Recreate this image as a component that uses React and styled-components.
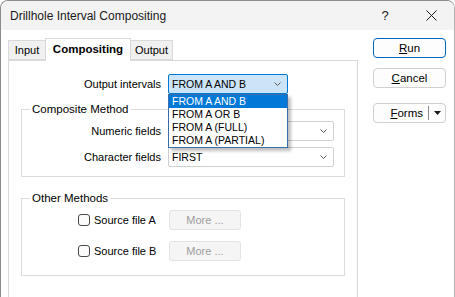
import React from 'react'
import styled, { createGlobalStyle } from 'styled-components'

const GlobalStyle = createGlobalStyle`
  html, body { margin: 0; padding: 0; background: #ffffff; }
  body { font-family: "Liberation Sans", Arial, sans-serif; font-size: 11px; color: #000; overflow: hidden; }
  * { box-sizing: border-box; }
`

const Window = styled.div`
  width: 455px;
  height: 297px;
  border-left: 1px solid #8c8c8c;
  border-top: 1px solid #8c8c8c;
  border-right: 1px solid #b0b0b0;
  border-top-left-radius: 8px;
  border-top-right-radius: 8px;
  background: #ffffff;
  display: flex;
  flex-direction: column;
  overflow: hidden;
`

const TitleBar = styled.div`
  height: 29px;
  background: #f3f3f3;
  display: flex;
  align-items: center;
  padding-left: 9px;
  flex-shrink: 0;
`

const TitleText = styled.div`
  flex: 1;
  font-size: 12px;
  color: #1a1a1a;
`

const CaptionButton = styled.div`
  width: 46px;
  height: 29px;
  display: flex;
  align-items: center;
  justify-content: center;
  font-size: 13px;
  color: #1a1a1a;
`

const Content = styled.div`
  flex: 1;
  display: flex;
  padding: 8px 0 0 7px;
  min-height: 0;
`

const MainColumn = styled.div`
  width: 350px;
  display: flex;
  flex-direction: column;
`

const TabStrip = styled.div`
  display: flex;
  align-items: flex-end;
  height: 22px;
  position: relative;
  z-index: 1;
`

const Tab = styled.div`
  width: ${p => p.$w}px;
  height: ${p => (p.$active ? 23 : 20)}px;
  margin-bottom: ${p => (p.$active ? -1 : 0)}px;
  margin-left: ${p => (p.$first ? 0 : -1)}px;
  border: 1px solid #d9d9d9;
  border-bottom: ${p => (p.$active ? 'none' : '1px solid #d9d9d9')};
  background: ${p => (p.$active ? '#ffffff' : '#f0f0f0')};
  font-weight: ${p => (p.$active ? 700 : 400)};
  font-size: ${p => (p.$active ? 11.5 : 11)}px;
  display: flex;
  align-items: center;
  justify-content: center;
  padding-bottom: ${p => (p.$active ? 3 : 0)}px;
  position: relative;
  z-index: ${p => (p.$active ? 2 : 1)};
`

const Panel = styled.div`
  flex: 1;
  border: 1px solid #d9d9d9;
  border-bottom: none;
  background: #ffffff;
  padding: 13px 11px 0 0;
  display: flex;
  flex-direction: column;
`

const FieldRow = styled.div`
  display: grid;
  grid-template-columns: ${p => p.$label}px ${p => p.$field}px;
  column-gap: 7px;
  align-items: center;
`

const Label = styled.div`
  text-align: right;
  color: #000;
`

const SelectWrap = styled.div`
  position: relative;
`

const Select = styled.div`
  height: 20px;
  border: 1px solid ${p => (p.$open ? '#0078d7' : '#d0d0d0')};
  border-radius: 2px;
  background: ${p => (p.$open ? '#cce4f7' : '#ffffff')};
  display: flex;
  align-items: center;
  padding: 0 6px 0 3px;
  font-size: 10.5px;
`

const SelectValue = styled.div`
  flex: 1;
`

const DropList = styled.div`
  position: absolute;
  top: 100%;
  left: 0;
  width: 100%;
  border: 1px solid #3b6ea8;
  background: #ffffff;
  box-shadow: 3px 3px 3px rgba(0, 0, 0, 0.25);
  z-index: 5;
  font-size: 10.5px;
`

const DropItem = styled.div`
  height: 13px;
  line-height: 13px;
  padding-left: 3px;
  background: ${p => (p.$selected ? '#0078d7' : 'transparent')};
  color: ${p => (p.$selected ? '#ffffff' : '#000000')};
`

const Group = styled.fieldset`
  margin: ${p => p.$top}px 0 0 12px;
  width: 324px;
  border: 1px solid #dcdcdc;
  padding: 4px 10px ${p => p.$bottom}px 0;
  min-width: 0;
`

const Legend = styled.legend`
  margin-left: 8px;
  padding: 0 2px;
  line-height: 16px;
  font-size: 11.5px;
`

const Rows = styled.div`
  display: flex;
  flex-direction: column;
  gap: ${p => p.$gap}px;
`

const CheckRow = styled.div`
  display: flex;
  align-items: center;
  padding-left: 56px;
`

const CheckLabel = styled.label`
  width: 91px;
  display: flex;
  align-items: center;
  gap: 4px;
`

const CheckBox = styled.span`
  width: 12px;
  height: 12px;
  border: 1px solid #4a4a4a;
  border-radius: 3px;
  background: #fbfbfb;
`

const MoreButton = styled.div`
  width: 72px;
  height: 20px;
  border: 1px solid #e3e3e3;
  border-radius: 3px;
  background: #f5f5f5;
  color: #9d9d9d;
  display: flex;
  align-items: center;
  justify-content: center;
`

const SideColumn = styled.div`
  width: 73px;
  margin-left: 15px;
  display: flex;
  flex-direction: column;
`

const Button = styled.div`
  height: 20px;
  margin-top: ${p => p.$mt}px;
  border: 1px solid ${p => (p.$primary ? '#0067c0' : '#d0d0d0')};
  border-radius: 4px;
  background: #fdfdfd;
  display: flex;
  align-items: center;
  justify-content: center;
  font-size: 11.5px;
`

const SplitText = styled.div`
  flex: 1;
  text-align: right;
  padding-right: 5px;
`

const SplitArrow = styled.div`
  width: 17px;
  height: 14px;
  border-left: 1px solid #8a8a8a;
  display: flex;
  align-items: center;
  justify-content: center;
`

const Chevron = () => (
  <svg width="7" height="4" viewBox="0 0 7 4">
    <path d="M0.5 0.5 L3.5 3.5 L6.5 0.5" fill="none" stroke="#5a5a5a" strokeWidth="1" />
  </svg>
)

const items = ['FROM A AND B', 'FROM A OR B', 'FROM A (FULL)', 'FROM A (PARTIAL)']

const App = () => {
  return (
    <>
      <GlobalStyle />
      <Window>
        <TitleBar>
          <TitleText>Drillhole Interval Compositing</TitleText>
          <CaptionButton>?</CaptionButton>
          <CaptionButton>
            <svg width="11" height="11" viewBox="0 0 11 11">
              <path d="M0.5 0.5 L10.5 10.5 M10.5 0.5 L0.5 10.5" stroke="#1a1a1a" strokeWidth="1" />
            </svg>
          </CaptionButton>
        </TitleBar>
        <Content>
          <MainColumn>
            <TabStrip>
              <Tab $first $w={38}>Input</Tab>
              <Tab $active $w={86}>Compositing</Tab>
              <Tab $w={43}>Output</Tab>
            </TabStrip>
            <Panel>
              <FieldRow $label={152} $field={120}>
                <Label>Output intervals</Label>
                <SelectWrap>
                  <Select $open>
                    <SelectValue>FROM A AND B</SelectValue>
                    <Chevron />
                  </Select>
                  <DropList>
                    {items.map((t, i) => (
                      <DropItem key={t} $selected={i === 0}>{t}</DropItem>
                    ))}
                  </DropList>
                </SelectWrap>
              </FieldRow>

              <Group $top={7} $bottom={9}>
                <Legend>Composite Method</Legend>
                <Rows $gap={6}>
                  <FieldRow $label={139} $field={166}>
                    <Label>Numeric fields</Label>
                    <Select>
                      <SelectValue></SelectValue>
                      <Chevron />
                    </Select>
                  </FieldRow>
                  <FieldRow $label={139} $field={166}>
                    <Label>Character fields</Label>
                    <Select>
                      <SelectValue>FIRST</SelectValue>
                      <Chevron />
                    </Select>
                  </FieldRow>
                </Rows>
              </Group>

              <Group $top={13} $bottom={14}>
                <Legend>Other Methods</Legend>
                <Rows $gap={11}>
                  <CheckRow>
                    <CheckLabel><CheckBox />Source file A</CheckLabel>
                    <MoreButton>More ...</MoreButton>
                  </CheckRow>
                  <CheckRow>
                    <CheckLabel><CheckBox />Source file B</CheckLabel>
                    <MoreButton>More ...</MoreButton>
                  </CheckRow>
                </Rows>
              </Group>
            </Panel>
          </MainColumn>

          <SideColumn>
            <Button $primary $mt={0}><span><u>R</u>un</span></Button>
            <Button $mt={10}><span><u>C</u>ancel</span></Button>
            <Button $mt={15}>
              <SplitText><u>F</u>orms</SplitText>
              <SplitArrow>
                <svg width="7" height="4" viewBox="0 0 7 4">
                  <path d="M0 0 H7 L3.5 4 Z" fill="#1a1a1a" />
                </svg>
              </SplitArrow>
            </Button>
          </SideColumn>
        </Content>
      </Window>
    </>
  )
}

export default App
